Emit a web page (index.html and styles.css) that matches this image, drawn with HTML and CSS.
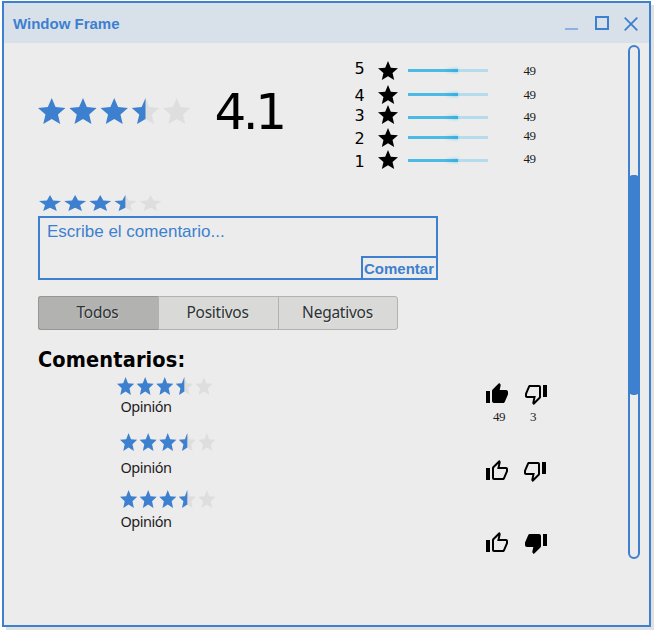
FILE: index.html
```html
<!DOCTYPE html>
<html lang="es">
<head>
<meta charset="utf-8">
<title>Window Frame</title>
<link rel="stylesheet" href="styles.css">
</head>
<body>
<svg class="defs" aria-hidden="true">
  <symbol id="star" viewBox="2 2 20 19" preserveAspectRatio="none">
    <path d="M12 17.27 18.18 21 16.54 13.97 22 9.24 14.81 8.63 12 2 9.19 8.63 2 9.24 7.46 13.97 5.82 21z"/>
  </symbol>
  <symbol id="rating" viewBox="0 0 111.2 19" preserveAspectRatio="none">
    <g fill="#3d80cf">
      <use href="#star" width="20" height="19"/>
      <use href="#star" x="22.8" width="20" height="19"/>
      <use href="#star" x="45.6" width="20" height="19"/>
    </g>
    <g fill="#dedede">
      <use href="#star" x="68.4" width="20" height="19"/>
      <use href="#star" x="91.2" width="20" height="19"/>
    </g>
    <path fill="#3d80cf" d="M78.4 0V15.27L72.22 19 73.86 11.97 68.4 7.24 75.59 6.63z"/>
  </symbol>
  <symbol id="up" viewBox="0 0 24 24">
    <path d="M1 21h4V9H1v12zm22-11c0-1.1-.9-2-2-2h-6.31l.95-4.57.03-.32c0-.41-.17-.79-.44-1.06L14.17 1 7.59 7.59C7.22 7.95 7 8.45 7 9v10c0 1.1.9 2 2 2h9c.83 0 1.54-.5 1.84-1.22l3.02-7.05c.09-.23.14-.47.14-.73v-2z"/>
  </symbol>
  <symbol id="up-line" viewBox="0 0 24 24">
    <path d="M5,9V21H1V9H5M9,21A2,2 0 0,1 7,19V9C7,8.45 7.22,7.95 7.59,7.59L14.17,1L15.23,2.06C15.5,2.33 15.67,2.7 15.67,3.11L15.64,3.43L14.69,8H21C22.11,8 23,8.9 23,10V12C23,12.26 22.95,12.5 22.86,12.73L19.84,19.78C19.54,20.5 18.83,21 18,21H9M9,19H18.03L21,12V10H12.21L13.34,4.68L9,9.03V19Z"/>
  </symbol>
  <symbol id="down" viewBox="0 0 24 24">
    <path d="M15 3H6c-.83 0-1.54.5-1.84 1.22l-3.02 7.05c-.09.23-.14.47-.14.73v2c0 1.1.9 2 2 2h6.31l-.95 4.57-.03.32c0 .41.17.79.44 1.06L9.83 23l6.59-6.59c.36-.36.58-.86.58-1.41V5c0-1.1-.9-2-2-2zm4 0v12h4V3h-4z"/>
  </symbol>
  <symbol id="down-line" viewBox="0 0 24 24">
    <path d="M19,15V3H23V15H19M15,3A2,2 0 0,1 17,5V15C17,15.55 16.78,16.05 16.41,16.41L9.83,23L8.77,21.94C8.5,21.67 8.33,21.3 8.33,20.88L8.36,20.57L9.31,16H3C1.89,16 1,15.1 1,14V12C1,11.74 1.05,11.5 1.14,11.27L4.16,4.22C4.46,3.5 5.17,3 6,3H15M15,5H5.97L3,12V14H11.78L10.65,19.32L15,14.97V5Z"/>
  </symbol>
</svg>
<div class="window">
  <header class="titlebar">
    <span class="title">Window Frame</span>
    <span class="minimize"></span>
    <span class="maximize"></span>
    <svg class="close" viewBox="0 0 14 14"><path d="M.7.7 13.3 13.3M13.3.7.7 13.3"/></svg>
  </header>
  <div class="content">
    <main class="main">
      <section class="summary">
        <svg class="stars-big"><use href="#rating"/></svg>
        <span class="score">4.1</span>
        <div class="histogram">
          <div class="level five"><span class="digit">5</span><svg class="star"><use href="#star"/></svg><span class="meter"></span><span class="count">49</span></div>
          <div class="level four"><span class="digit">4</span><svg class="star"><use href="#star"/></svg><span class="meter"></span><span class="count">49</span></div>
          <div class="level three"><span class="digit">3</span><svg class="star"><use href="#star"/></svg><span class="meter"></span><span class="count">49</span></div>
          <div class="level two"><span class="digit">2</span><svg class="star"><use href="#star"/></svg><span class="meter"></span><span class="count">49</span></div>
          <div class="level one"><span class="digit">1</span><svg class="star"><use href="#star"/></svg><span class="meter"></span><span class="count">49</span></div>
        </div>
      </section>
      <svg class="stars-wide"><use href="#rating"/></svg>
      <div class="editor">
        <span class="placeholder">Escribe el comentario...</span>
        <span class="submit">Comentar</span>
      </div>
      <div class="tabs">
        <span class="tab active">Todos</span>
        <span class="tab">Positivos</span>
        <span class="tab">Negativos</span>
      </div>
      <h2 class="heading">Comentarios:</h2>
      <article class="comment first">
        <div class="body"><svg class="stars"><use href="#rating"/></svg><p class="opinion">Opinión</p></div>
        <div class="vote"><svg class="icon"><use href="#up"/></svg><span class="count">49</span></div>
        <div class="vote"><svg class="icon"><use href="#down-line"/></svg><span class="count low">3</span></div>
      </article>
      <article class="comment second">
        <div class="body"><svg class="stars"><use href="#rating"/></svg><p class="opinion">Opinión</p></div>
        <div class="vote"><svg class="icon"><use href="#up-line"/></svg></div>
        <div class="vote"><svg class="icon"><use href="#down-line"/></svg></div>
      </article>
      <article class="comment third">
        <div class="body"><svg class="stars"><use href="#rating"/></svg><p class="opinion">Opinión</p></div>
        <div class="vote"><svg class="icon"><use href="#up-line"/></svg></div>
        <div class="vote"><svg class="icon"><use href="#down"/></svg></div>
      </article>
    </main>
    <div class="scrollbar"><div class="thumb"></div></div>
  </div>
</div>
</body>
</html>
```
FILE: styles.css
```css
* { box-sizing: border-box; }
html { overflow: hidden; background: #fff; }
body { margin: 0; padding: 1px 0 0 2px; width: 654px; height: 630px; overflow: hidden; color: #000; }
svg { display: block; flex: none; }
.defs { display: none; }
.window {
  width: 649px; height: 626px;
  border: 2px solid #3d80cf;
  background: #ececec;
  box-shadow: 4px 4px 0 #e1e1e1;
}
.titlebar {
  display: flex; align-items: center;
  height: 40px; padding: 0 9px 0 9px;
  background: #d8e0ea;
}
.title { flex: 1; font: bold 15px/20px "Liberation Sans", sans-serif; color: #3d80cf; padding-top: 2px; }
.minimize { width: 13px; height: 2px; margin: 11px 17px 0 0; background: #8eb0dc; }
.maximize { width: 14px; height: 14px; margin-right: 15px; border: 2px solid #3d80cf; }
.close { width: 14px; height: 14px; margin: 1px 2px 0 0; fill: none; stroke: #3d80cf; stroke-width: 1.8; }

.content { display: flex; height: 582px; }
.main { width: 624px; padding-left: 34px; }

.summary { display: flex; height: 152px; }
.stars-big { width: 152.5px; height: 26px; margin-top: 55px; }
.score { width: 99px; margin: 39px 0 0 24px; font: 50px/60px "DejaVu Sans", sans-serif; letter-spacing: -3.5px; }
.histogram { margin: 15px 0 0 40px; }
.level { display: flex; }
.digit { width: 24px; padding-left: 1px; font: 16px/20px "DejaVu Sans", sans-serif; }
.star { width: 20px; height: 19px; margin: 3px 10px 0 0; }
.meter { width: 80px; height: 3px; margin: 11px 36px 0 0; background: linear-gradient(90deg, #4bbbe6 0 36px, #35b1e1 50px, #b5dcec 50px); position: relative; }
.meter::before { content: ""; position: absolute; left: 35px; top: -1px; width: 15px; height: 5px; border-radius: 50% 0 0 50%; background: linear-gradient(90deg, transparent, #35b1e166); filter: blur(1px); }
.count { font: 13px/14px "Liberation Serif", serif; letter-spacing: -.5px; color: #1c1c1c; }
.level .count { margin-top: 6px; }
.five { height: 24px; }
.five .digit { padding-top: 1px; }
.four { height: 20px; }
.four .digit { padding-top: 4px; }
.three { height: 23px; }
.three .digit { padding-top: 4px; }
.three .meter { margin-top: 14px; }
.three .count { margin-top: 8px; }
.two { height: 22px; }
.two .digit { padding-top: 4px; }
.two .meter { margin-top: 11px; }
.two .count { margin-top: 4px; }
.one .digit { padding-top: 5px; }
.one .meter { margin-top: 12px; }
.one .count { margin-top: 5px; }

.stars-wide { width: 122.5px; height: 16px; margin-left: .5px; }
.editor {
  display: flex; justify-content: space-between;
  width: 400px; height: 64px; margin-top: 5px;
  border: 2px solid #3d80cf; color: #3d80cf;
}
.placeholder { padding: 4px 0 0 7px; font: 17px/20px "Liberation Sans", sans-serif; }
.submit {
  align-self: flex-end; width: 77px; height: 24px; margin: 0 -2px -2px 0; padding-left: 1px;
  border: 2px solid #3d80cf;
  font: bold 15px/21px "Liberation Sans", sans-serif;
}

.tabs { display: flex; width: 360px; height: 34px; margin-top: 16px; border: 1px solid #b2b2af; border-radius: 3px; background: #d9d9d7; }
.tab { flex: 0 0 120px; padding-right: 2px; border-left: 1px solid #b2b2af; text-align: center; font: 15.5px/31px "Noto Sans", sans-serif; letter-spacing: -.25px; color: #2d3334; text-shadow: 1px 1px 0 #ffffff66; }
.tab.active { margin: -1px 0 -1px -1px; background: #b2b2b0; border: 1px solid #969692; border-right: 0; border-radius: 3px 0 0 3px; }
.tab.active + .tab { border-left-color: #b2b2b0; }

.heading { margin: 16px 0 0; height: 31px; font: bold 21.5px/28px "DejaVu Sans Condensed", "DejaVu Sans", sans-serif; font-stretch: condensed; letter-spacing: .15px; }
.comment { display: flex; align-items: flex-start; padding-left: 79px; }
.body { width: 368px; }
.stars { width: 95.5px; height: 18px; }
.opinion { margin: 0; padding-left: 3.5px; font: 14.5px/20px "Noto Sans", sans-serif; letter-spacing: -.5px; color: #1c1c1c; }
.vote { width: 39px; }
.icon { width: 24px; height: 24px; }
.vote .count { display: block; padding-left: 8px; margin-top: 4px; }
.vote .low { padding-left: 6px; }
.first { height: 56px; }
.first .opinion { padding-top: 1px; }
.first .vote { padding-top: 5px; }
.second { height: 57px; }
.second .opinion { padding-top: 6px; }
.second .stars, .third .stars { margin-left: 3px; }
.second .vote { padding-top: 26px; }
.second .vote:last-child { margin-left: -1px; }
.third .opinion { padding-top: 3px; }
.third .vote { padding-top: 41px; }

.scrollbar { width: 12px; height: 514px; margin-top: 2px; padding-top: 128px; border: 2px solid #3d80cf; border-radius: 6px; }
.thumb { height: 220px; margin: 0 -2px; border-radius: 5px; background: #3d80cf; }
```
